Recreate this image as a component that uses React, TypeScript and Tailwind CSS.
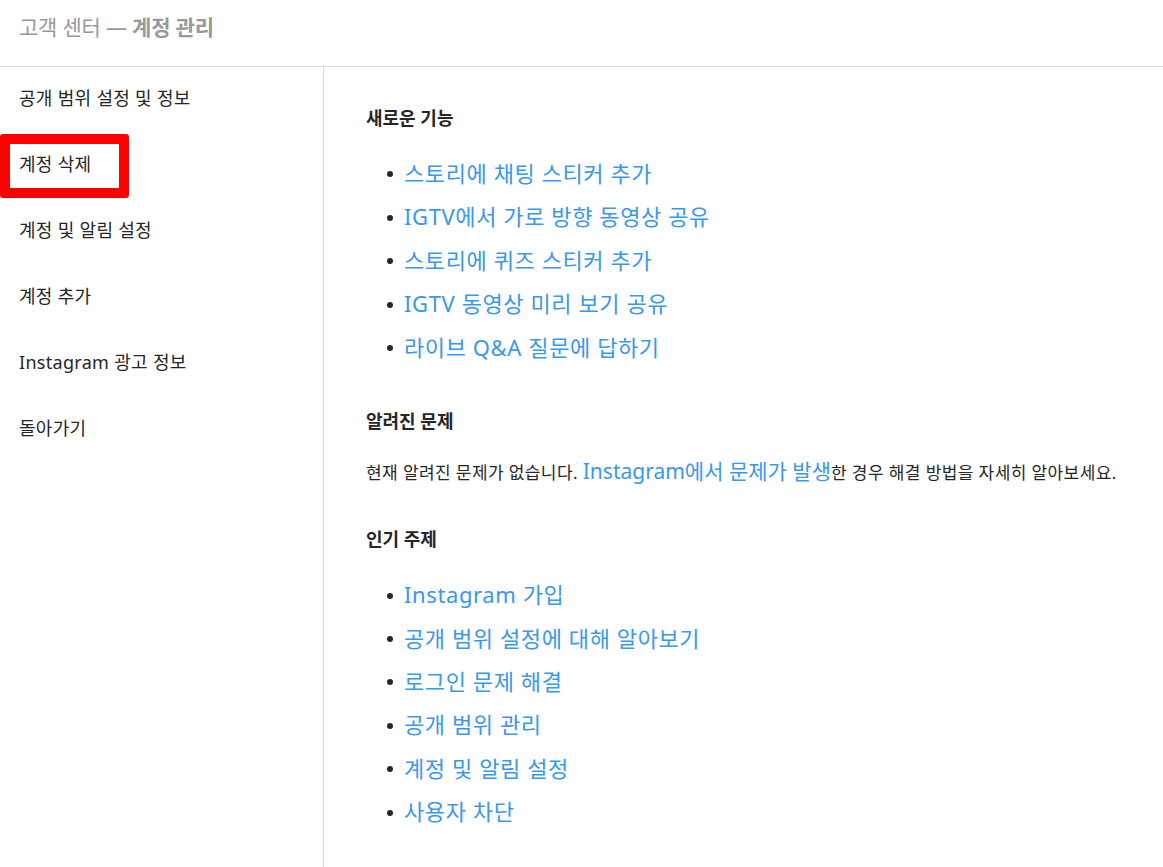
import React from "react";

const FONT = "font-['Noto_Sans','Noto_Sans_CJK_KR',sans-serif]";

const sideItems = [
  "공개 범위 설정 및 정보",
  "계정 삭제",
  "계정 및 알림 설정",
  "계정 추가",
  "Instagram 광고 정보",
  "돌아가기",
];

const newFeatures = [
  "스토리에 채팅 스티커 추가",
  "IGTV에서 가로 방향 동영상 공유",
  "스토리에 퀴즈 스티커 추가",
  "IGTV 동영상 미리 보기 공유",
  "라이브 Q&A 질문에 답하기",
];

const popular = [
  "Instagram 가입",
  "공개 범위 설정에 대해 알아보기",
  "로그인 문제 해결",
  "공개 범위 관리",
  "계정 및 알림 설정",
  "사용자 차단",
];

function LinkList({ items, itemH }: { items: string[]; itemH: string }) {
  return (
    <ul className="pl-[21px]">
      {items.map((t) => (
        <li key={t} className={`flex items-center ${itemH}`}>
          <span className="w-[6px] h-[6px] rounded-full bg-[#262626] mr-[11px] mt-[3px]" />
          <a className="text-[22px] tracking-[0.6px] text-[#3897f0] leading-none">{t}</a>
        </li>
      ))}
    </ul>
  );
}

export default function App() {
  return (
    <div className={`${FONT} min-h-screen bg-white text-[#262626] flex flex-col`}>
      {/* Header */}
      <header className="h-[67px] border-b border-[#dbdbdb] flex items-start pt-[12px] px-[19px]">
        <h1 className="text-[21px] tracking-[-0.2px] text-[#999999] leading-[30px]">
          고객 센터 — <span className="font-bold">계정 관리</span>
        </h1>
      </header>

      <div className="flex flex-1">
        {/* Sidebar */}
        <nav className="relative w-[324px] shrink-0 border-r border-[#dbdbdb]">
          {sideItems.map((t) => (
            <div
              key={t}
              className="h-[66px] flex items-center px-[19px] pb-[4px] text-[18px] tracking-[0.3px] text-[#262626]"
            >
              {t}
            </div>
          ))}
          {/* red highlight annotation */}
          <div className="absolute left-0 top-[67px] w-[129px] h-[64px] border-[10px] border-[#ff0000] rounded-[3px] pointer-events-none" />
        </nav>

        {/* Main */}
        <main className="flex-1 pl-[42px] pt-[39px]">
          <h2 className="text-[18px] font-bold leading-[24px]">새로운 기능</h2>
          <div className="mt-[21px]">
            <LinkList items={newFeatures} itemH="h-[43.5px]" />
          </div>

          <h2 className="mt-[40px] text-[18px] font-bold leading-[24px]">알려진 문제</h2>
          <p className="mt-[24px] text-[17px] leading-[28px] tracking-[0.4px]">
            현재 알려진 문제가 없습니다.{" "}
            <a className="text-[21px] text-[#3897f0] tracking-normal">Instagram에서 문제가 발생</a>한 경우 해결
            방법을 자세히 알아보세요.
          </p>

          <h2 className="mt-[40px] text-[18px] font-bold leading-[24px]">인기 주제</h2>
          <div className="mt-[22px]">
            <LinkList items={popular} itemH="h-[43.4px]" />
          </div>
        </main>
      </div>
    </div>
  );
}
